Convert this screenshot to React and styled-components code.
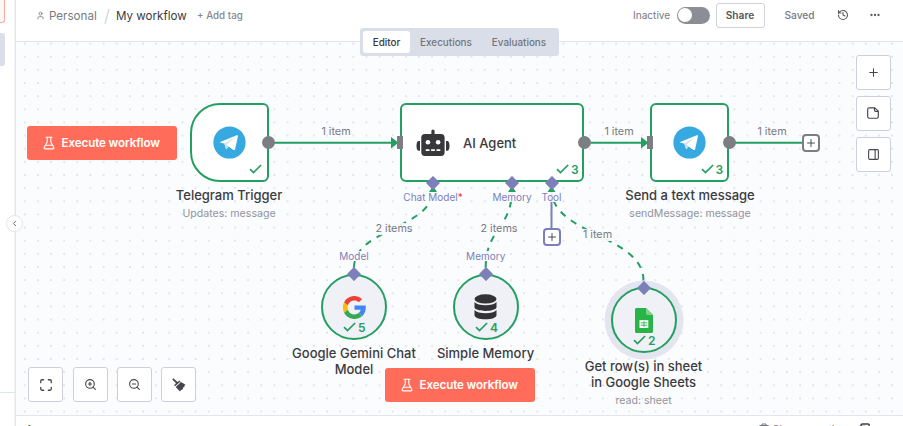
import React from 'react';
import styled, { createGlobalStyle, css } from 'styled-components';
import {
  User, History, Ellipsis, Plus, PanelRight, Maximize, ZoomIn, ZoomOut, ChevronLeft,
} from 'lucide-react';

const c = {
  green: '#23a061',
  grey: '#7d7e84',
  violet: '#7c7fb9',
  text: '#3a3b40',
  muted: '#777a82',
  light: '#92949c',
  canvas: '#fbfcfe',
  line: '#e1e5ee',
  coral: '#ff6d5a',
};

/* Canvas coordinates start at the viewport's top-left corner. */
const ORIGIN = { x: 16, y: 42 };

const Global = createGlobalStyle`
  * { box-sizing: border-box; }
  body { margin: 0; font-family: Inter, "Liberation Sans", sans-serif; color: ${c.text}; background: #fff; }
  button { font-family: inherit; padding: 0; margin: 0; }
`;

const Page = styled.div`
  display: flex;
  width: 903px;
  height: 426px;
  overflow: hidden;
`;

const Sidebar = styled.aside`
  position: relative;
  flex: 0 0 16px;
  display: flex;
  flex-direction: column;
  border-right: 1px solid ${c.line};
  box-shadow: inset -1px 0 0 #f3f5f9;
`;
const SideAlert = styled.div`
  width: 5px;
  height: 23px;
  border: 1px solid #f8aaa3;
  border-width: 0 1px 1px 0;
  border-radius: 0 0 3px 0;
  background: #fff7f6;
`;
const SideActive = styled.div`
  width: 5px;
  height: 33px;
  margin-top: 10px;
  border-radius: 0 3px 3px 0;
  background: #dadee9;
`;
const SideRule = styled.div`
  margin-top: 326px;
  height: 1px;
  background: ${c.line};
`;
const Collapse = styled.button`
  position: absolute;
  z-index: 3;
  left: 6px;
  top: 215px;
  width: 17px;
  height: 17px;
  display: grid;
  place-items: center;
  border: 1px solid ${c.line};
  border-radius: 50%;
  background: #fff;
  color: #606168;
`;

const Main = styled.main`
  position: relative;
  flex: 1;
  min-width: 0;
  display: flex;
  flex-direction: column;
`;
const Header = styled.header`
  flex: 0 0 42px;
  display: flex;
  justify-content: space-between;
  border-bottom: 1px solid ${c.line};
  padding: 0 22px 0 20px;
`;
const Crumbs = styled.div`
  display: flex;
  align-items: center;
  height: 31px;
  font-size: 11.6px;
  white-space: nowrap;
`;
const Project = styled.span`
  display: flex;
  align-items: center;
  gap: 4px;
  width: 68px;
  color: ${c.muted};
`;
const Slash = styled.span`
  width: 12px;
  font-size: 17px;
  font-weight: 300;
  color: #c9cdd8;
`;
const Title = styled.span`
  width: 81px;
`;
const AddTag = styled.span`
  font-size: 9.8px;
  font-weight: 500;
  color: #85878f;
`;
const Actions = styled.div`
  display: flex;
  align-items: center;
  height: 30px;
  font-size: 10px;
  font-weight: 500;
  color: ${c.muted};
`;
const State = styled.span`
  width: 43.5px;
  font-weight: 400;
  font-size: 10.1px;
`;
const Toggle = styled.span`
  width: 33px;
  height: 17px;
  padding: 1.5px;
  border-radius: 9px;
  background: #8d8e95;
  &::before {
    content: '';
    display: block;
    width: 14px;
    height: 14px;
    border-radius: 50%;
    background: #fff;
  }
`;
const Share = styled.button`
  width: 49px;
  height: 25px;
  margin: 0 20px 0 6px;
  border: 1px solid #cfd1da;
  border-radius: 3px;
  background: #fff;
  color: #55565c;
  font-size: 10.2px;
  font-weight: 600;
`;
const Saved = styled.span`
  width: 52.5px;
  font-size: 10.2px;
`;
const HeaderIcon = styled.span`
  display: grid;
  color: #55565c;
  & + & { margin-left: 20px; }
`;

const Tabs = styled.nav`
  position: absolute;
  z-index: 2;
  left: 344px;
  top: 28px;
  display: flex;
  width: 199px;
  height: 27.5px;
  padding: 3px;
  border-radius: 3px;
  background: #dadee8;
`;
const Tab = styled.button`
  width: ${(p) => p.$w}px;
  border: 0;
  border-radius: 3px;
  background: ${(p) => (p.$active ? '#fff' : 'transparent')};
  color: ${(p) => (p.$active ? c.text : '#73757e')};
  font-size: 9.9px;
  font-weight: 500;
`;

const Canvas = styled.section`
  position: relative;
  flex: 0 0 373px;
  overflow: hidden;
  background-color: ${c.canvas};
  background-image: radial-gradient(circle at 50% 50%, #d9dbe1 0, #dfe1e7 0.6px, transparent 1.1px);
  background-size: 13.155px 13.155px;
  background-position: 2.2px -5px;
`;
const Edges = styled.svg`
  position: absolute;
  inset: 0;
  width: 887px;
  height: 373px;
`;

const at = css`
  position: absolute;
  left: ${(p) => p.$x - ORIGIN.x}px;
  top: ${(p) => p.$y - ORIGIN.y}px;
`;
const NodeBox = styled.div`
  ${at}
  width: ${(p) => p.$w}px;
  height: 79px;
  display: flex;
  align-items: center;
  justify-content: ${(p) => (p.$wide ? 'flex-start' : 'center')};
  gap: 13px;
  padding-left: ${(p) => (p.$wide ? 14 : 0)}px;
  border: 2px solid ${c.green};
  border-radius: ${(p) => (p.$trigger ? '30px 6px 6px 30px' : '6px')};
  background: #fff;
  font-size: 13px;
  font-weight: 500;
`;
const NodeCircle = styled.div`
  ${at}
  width: 66px;
  height: 66px;
  display: grid;
  place-items: center;
  border: 2px solid ${c.green};
  border-radius: 50%;
  background: #f0f0f7;
  box-shadow: ${(p) => (p.$selected ? '0 0 0 6.5px #e4e6ef' : 'none')};
`;
const Caption = styled.div`
  ${at}
  width: ${(p) => p.$w}px;
  text-align: center;
  font-size: 13px;
  font-weight: 500;
  line-height: 16.5px;
  white-space: nowrap;
`;
const Sub = styled.div`
  margin-top: 2px;
  font-size: 10.6px;
  font-weight: 400;
  color: ${c.light};
`;
const StatusBox = styled.div`
  ${at}
  display: flex;
  align-items: center;
  gap: 2px;
  height: 14px;
  color: ${c.green};
  font-size: 12px;
  font-weight: 600;
`;
const EdgeLabel = styled.span`
  ${at}
  transform: translate(-50%, -50%);
  line-height: 12px;
  font-size: 10.8px;
  color: ${c.muted};
  background: ${(p) => (p.$plain ? 'none' : 'rgba(251, 252, 254, 0.9)')};
  white-space: nowrap;
`;
const PortLabel = styled(EdgeLabel)`
  font-size: 10px;
  line-height: 10px;
  color: ${c.violet};
  em { font-style: normal; color: #f33; }
`;
const Dot = styled.i`
  ${at}
  width: 13px;
  height: 13px;
  border-radius: 50%;
  background: ${c.grey};
`;
const Inlet = styled.i`
  ${at}
  width: 6px;
  height: 13px;
  background: ${c.grey};
`;
const Diamond = styled.i`
  ${at}
  width: 10px;
  height: 10px;
  transform: translate(-50%, -50%) rotate(45deg);
  border-radius: 0.5px;
  background: ${c.violet};
`;
const PlusBox = styled.button`
  ${at}
  width: 18px;
  height: 18px;
  display: grid;
  place-items: center;
  border: 2px solid ${(p) => p.$color};
  border-radius: 4px;
  background: #fff;
  color: #4b4c52;
`;
const RunButton = styled.button`
  ${at}
  width: 150px;
  height: 34px;
  display: flex;
  align-items: center;
  justify-content: center;
  gap: 6.5px;
  border: 0;
  border-radius: 3px;
  background: ${c.coral};
  color: #fff;
  font-size: 11.6px;
  font-weight: 600;
  letter-spacing: -0.1px;
`;
const ControlGroup = styled.div`
  ${at}
  display: flex;
  flex-direction: ${(p) => (p.$column ? 'column' : 'row')};
  gap: ${(p) => (p.$column ? 6 : 9.4)}px;
`;
const Control = styled.button`
  width: 35px;
  height: 35px;
  display: grid;
  place-items: center;
  border: 1px solid #cdd0da;
  border-radius: 3px;
  background: #fff;
  color: #46474c;
`;

const LogBar = styled.footer`
  flex: 0 0 11px;
  display: flex;
  align-items: flex-start;
  overflow: hidden;
  border-top: 1px solid ${c.line};
  padding: 7px 33px 0 12px;
  font-size: 10px;
  line-height: 13px;
  color: ${c.muted};
`;
const LogTitle = styled.span`
  flex: 1;
  color: ${c.text};
  font-weight: 600;
`;
const ClearRun = styled.span`
  display: flex;
  gap: 3px;
  margin-right: 13px;
`;

const Check = () => (
  <svg width="13" height="10" viewBox="0 0 13 10" fill="none" stroke="currentColor" strokeWidth="1.7">
    <path d="M1 5.200 4.500 8.600 12.100 1" />
  </svg>
);
const Status = ({ x, y, count }) => (
  <StatusBox $x={x} $y={y}><Check />{count}</StatusBox>
);
const Flask = () => (
  <svg width="12" height="14" viewBox="0 0 12 14" fill="none" stroke="#fff" strokeWidth="1.1" strokeLinecap="round" strokeLinejoin="round">
    <path d="M3 1.200h6M4.200 1.200v4.900L1.300 11.200c-.5.9 0 1.700.9 1.700h7.600c.9 0 1.400-.8.9-1.700L7.800 6.100V1.200M2.800 9.200h6.400" />
  </svg>
);
const Telegram = () => (
  <svg width="33" height="33" viewBox="0 0 33 33">
    <circle cx="16.500" cy="16.500" r="16.100" fill="#35a9e0" />
    <path d="M6.600 16.200 23.700 9.300c.8-.3 1.400.1 1.200 1.200L22.100 23.200c-.2.9-.8 1.100-1.500.7l-8.200-6z" fill="#fff" />
    <path d="M11.200 17.600 13.200 23.500 16 20.500z" fill="#c5d8ea" />
    <path d="M13.200 23.500 13.600 19 23 10.400 11.200 17.600z" fill="#d5e2ee" />
    <path d="M13.600 19 23.600 10.200 20.800 23.900z" fill="#fff" />
  </svg>
);
const Robot = () => (
  <svg width="34" height="28" viewBox="0 0 34 28" fill="#38383a">
    <path d="M15.400 2a1.600 1.600 0 0 1 3.200 0V5H25a3.600 3.600 0 0 1 3.600 3.600v14.600A3.700 3.700 0 0 1 25 27H9a3.700 3.700 0 0 1-3.700-3.700V8.600A3.600 3.600 0 0 1 9 5h6.400z" />
    <path d="M4 12v9.800H2.700C1.400 21.800.5 20 .5 16.900S1.400 12 2.700 12zM30 12v9.800h1.300c1.300 0 2.200-1.800 2.200-4.900S32.600 12 31.300 12z" />
    <circle cx="11.900" cy="13.200" r="2.300" fill="#fff" />
    <circle cx="22.100" cy="13.200" r="2.300" fill="#fff" />
    <path d="M9.700 20.200h3.800v1.900H9.700zM15.100 20.200h3.800v1.900h-3.800zM20.500 20.200h3.800v1.900h-3.800z" fill="#fff" />
  </svg>
);
const Google = () => (
  <svg width="23" height="23" viewBox="2.200 2.200 43.600 43.600">
    <path fill="#fbbc05" d="M11.500 28.300A13.400 13.400 0 0 1 11.500 19.700L4.300 14.200a22 22 0 0 0 0 19.600z" />
    <path fill="#ea4335" d="M24 10.800c3.200 0 6 1.100 8.200 3.200l6.200-6.200A21.800 21.800 0 0 0 4.300 14.200l7.200 5.600A13.100 13.100 0 0 1 24 10.800z" />
    <path fill="#34a853" d="M24 37.200a13.100 13.100 0 0 1-12.500-9l-7.200 5.600A21.900 21.900 0 0 0 38.700 40l-7-5.400A13 13 0 0 1 24 37.200z" />
    <path fill="#4285f4" d="M45.100 20H24v8.500h11.800a10 10 0 0 1-4.100 6.100l7 5.400c4.400-4 7.700-10.600 6.400-20z" />
  </svg>
);
const Database = () => (
  <svg width="23" height="26" viewBox="0 0 23 26" fill="#333335">
    <ellipse cx="11.500" cy="4.900" rx="11" ry="4.600" />
    <path d="M.5 8c2 2.200 6 3.200 11 3.200S20.500 10.200 22.500 8v5.200c0 2-4.800 3.700-11 3.700S.5 15.200.5 13.200z" />
    <path d="M.5 16c2 2.200 6 3.200 11 3.200s9-1 11-3.200v5.200c0 2.300-4.800 4.100-11 4.100S.5 23.500.5 21.200z" />
  </svg>
);
const Sheets = () => (
  <svg width="18" height="25" viewBox="0 0 18 25">
    <path d="M1.500 0H11l7 7v16.500c0 .9-.6 1.500-1.500 1.500h-15C.6 25 0 24.400 0 23.500v-22C0 .6.600 0 1.500 0z" fill="#28b446" />
    <path d="M11 0l7 7h-5.500C11.600 7 11 6.400 11 5.500z" fill="#7fd18d" />
    <path d="M4.500 12.200h8.800v7.800H4.500z" fill="#fff" />
    <path d="M5.700 14.800h6.500M5.700 17.200h6.500M9 13.300v5.600" stroke="#28b446" strokeWidth="0.900" />
  </svg>
);
const StickyNote = () => (
  <svg width="12" height="12" viewBox="0 0 12 12" fill="none" stroke="currentColor" strokeWidth="1.150" strokeLinejoin="round">
    <path d="M7.800.8H2.200C1.300.8.700 1.400.700 2.200v7.600c0 .8.600 1.400 1.500 1.400h7.600c.900 0 1.500-.6 1.500-1.400V4.200z" />
    <path d="M7.500.9v2.400c0 .7.400 1.100 1.100 1.100h2.600" />
  </svg>
);
const Broom = () => (
  <svg width="14" height="14" viewBox="0 0 14 14" fill="#46474c">
    <path d="M.3 1.400 1.400.3 5.600 3.900 7.600 2.400l.9 1L3 8.300l-.9-1L4 5.300z" />
    <path d="M9 4 13.600 6.800 12.200 7.700l.4 1.400-1.600.5-.2 1.900-1.600.2L8 13.600 3.700 8.900z" />
  </svg>
);
const Suitcase = () => (
  <svg width="10" height="10" viewBox="0 0 10 10" fill="none" stroke="#777a82">
    <path d="M.5 2.500h9M3 2.500V1h4v1.500M1.500 2.500V9.500h7v-7" />
  </svg>
);
const PopOut = () => (
  <svg width="11" height="10" viewBox="0 0 11 10" fill="none" stroke="#3f4046" strokeWidth="1.500">
    <path d="M2 5V2.500C2 1.500 2.700 1 3.500 1H9c.8 0 1.200.5 1.200 1.300V8M.5 3.500h5v5" />
  </svg>
);

export default function App() {
  return (
    <>
      <Global />
      <Page>
        <Sidebar>
          <SideAlert />
          <SideActive />
          <SideRule />
          <Collapse><ChevronLeft size={9} strokeWidth={2.500} /></Collapse>
        </Sidebar>
        <Main>
          <Header>
            <Crumbs>
              <Project><User size={9} strokeWidth={2.200} />Personal</Project>
              <Slash>/</Slash>
              <Title>My workflow</Title>
              <AddTag>+ Add tag</AddTag>
            </Crumbs>
            <Actions>
              <State>Inactive</State>
              <Toggle />
              <Share>Share</Share>
              <Saved>Saved</Saved>
              <HeaderIcon><History size={12} strokeWidth={2.200} /></HeaderIcon>
              <HeaderIcon><Ellipsis size={12} strokeWidth={2.600} /></HeaderIcon>
            </Actions>
          </Header>
          <Tabs>
            <Tab $w={47} $active>Editor</Tab>
            <Tab $w={72}>Executions</Tab>
            <Tab $w={74}>Evaluations</Tab>
          </Tabs>

          <Canvas>
            <Edges viewBox={`${ORIGIN.x} ${ORIGIN.y} 887 373`} fill="none" stroke={c.green} strokeWidth="2">
              <path d="M269 142.800H392M584 142.800H642M729 142.800H803" />
              <path d="M391 137l7.500 5.700-7.500 5.700zM641 137l7.500 5.700-7.500 5.700z" fill={c.green} stroke="none" />
              <g strokeDasharray="6.600 6.600">
                <path d="M354 267.500C354 228.500 433 228.500 433 189.500" />
                <path d="M485.700 267.500C485.700 228.500 512 228.500 512 189.500" />
                <path d="M643.500 280.700C643.500 235 551.500 235 551.500 189.500" />
              </g>
              <path d="M551.500 188V228" stroke={c.violet} />
              <path d="M429 192l4-6 4 6zM508 192l4-6 4 6zM547.500 192l4-6 4 6z" fill={c.green} stroke="none" />
            </Edges>

            <EdgeLabel $x={336} $y={131.800} $plain>1 item</EdgeLabel>
            <EdgeLabel $x={619} $y={131.800} $plain>1 item</EdgeLabel>
            <EdgeLabel $x={772} $y={131.800} $plain>1 item</EdgeLabel>
            <EdgeLabel $x={394} $y={228.500}>2 items</EdgeLabel>
            <EdgeLabel $x={499} $y={228.500}>2 items</EdgeLabel>
            <EdgeLabel $x={597.500} $y={235}>1 item</EdgeLabel>
            <PortLabel $x={433} $y={197}>Chat Model<em>*</em></PortLabel>
            <PortLabel $x={512} $y={197}>Memory</PortLabel>
            <PortLabel $x={551.500} $y={197}>Tool</PortLabel>
            <PortLabel $x={354} $y={256}>Model</PortLabel>
            <PortLabel $x={485.700} $y={256}>Memory</PortLabel>

            <RunButton $x={26.500} $y={125.500}><Flask />Execute workflow</RunButton>

            <NodeBox $x={190} $y={103} $w={79} $trigger><Telegram /></NodeBox>
            <Status x={249} y={162} />
            <Dot $x={262} $y={136} />
            <Caption $x={169} $y={187} $w={120}>Telegram Trigger<Sub>Updates: message</Sub></Caption>

            <NodeBox $x={400} $y={103} $w={184} $wide><Robot />AI Agent</NodeBox>
            <Status x={556} y={162} count="3" />
            <Inlet $x={397} $y={136} />
            <Dot $x={578} $y={136} />

            <NodeBox $x={650} $y={103} $w={79}><Telegram /></NodeBox>
            <Status x={700.500} y={162} count="3" />
            <Inlet $x={647} $y={136} />
            <Dot $x={722.500} $y={136} />
            <Caption $x={620} $y={187} $w={140}>Send a text message<Sub>sendMessage: message</Sub></Caption>
            <PlusBox $x={802.400} $y={133.500} $color={c.grey}><Plus size={12} /></PlusBox>

            <NodeCircle $x={321} $y={274}><Google /></NodeCircle>
            <Status x={343} y={320} count="5" />
            <Caption $x={284} $y={344.500} $w={140}>Google Gemini Chat<br />Model</Caption>

            <NodeCircle $x={452.500} $y={274}><Database /></NodeCircle>
            <Status x={475} y={320} count="4" />
            <Caption $x={415.500} $y={344.500} $w={140}>Simple Memory</Caption>

            <NodeCircle $x={610.500} $y={287} $selected><Sheets /></NodeCircle>
            <Status x={633} y={333} count="2" />
            <Caption $x={573.500} $y={357.500} $w={140}>
              Get row(s) in sheet<br />in Google Sheets<Sub>read: sheet</Sub>
            </Caption>

            <Diamond $x={433} $y={182.500} />
            <Diamond $x={512} $y={182.500} />
            <Diamond $x={551.500} $y={182.500} />
            <Diamond $x={354} $y={274} />
            <Diamond $x={485.700} $y={274} />
            <Diamond $x={643.700} $y={287.500} />
            <PlusBox $x={542.500} $y={228} $color={c.violet}><Plus size={12} /></PlusBox>

            <RunButton $x={384.500} $y={367.500}><Flask />Execute workflow</RunButton>

            <ControlGroup $x={855.500} $y={54.500} $column>
              <Control><Plus size={13} /></Control>
              <Control><StickyNote /></Control>
              <Control><PanelRight size={13} /></Control>
            </ControlGroup>
            <ControlGroup $x={28.300} $y={367}>
              <Control><Maximize size={14} strokeWidth={2.200} /></Control>
              <Control><ZoomIn size={13} /></Control>
              <Control><ZoomOut size={13} /></Control>
              <Control><Broom /></Control>
            </ControlGroup>
          </Canvas>

          <LogBar>
            <LogTitle>Logs</LogTitle>
            <ClearRun><Suitcase />Clear execution</ClearRun>
            <PopOut />
          </LogBar>
        </Main>
      </Page>
    </>
  );
}
